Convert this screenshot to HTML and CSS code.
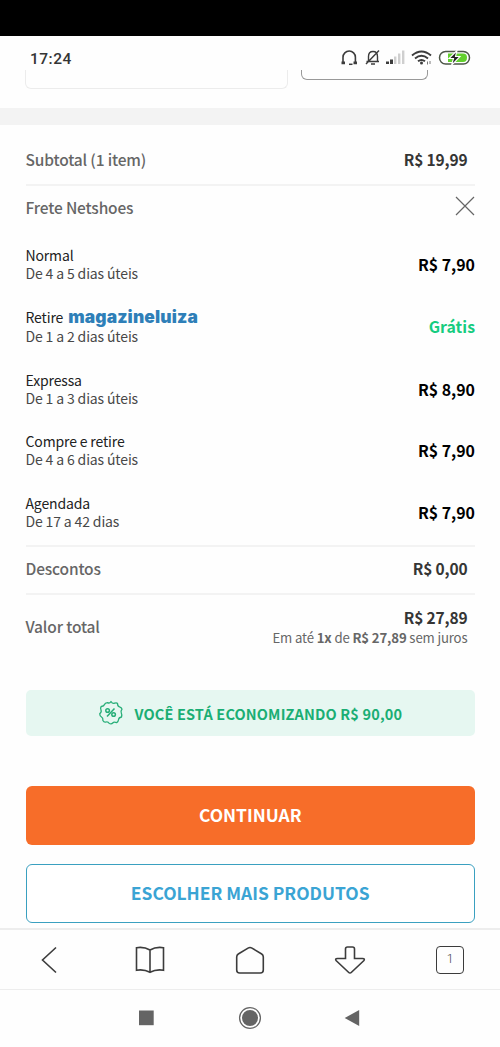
FILE: index.html
```html
<!DOCTYPE html>
<html lang="pt-BR">
<head>
<meta charset="utf-8">
<title>Carrinho</title>
<link rel="stylesheet" href="styles.css">
</head>
<body>
<div class="notch"></div>
<header class="status">
  <span class="clock">17:24</span>
  <svg class="status-icons" width="134" height="20" viewBox="0 0 134 20">
    <g fill="none" stroke="#3c3c3c" stroke-width="1.6">
      <path d="M4 15.200V9.200a6.200 6.200 0 0 1 12.400 0V15.200"/>
      <path d="M2.500 14.800h3.500M14.500 14.800h3.500" stroke-width="2.800"/>
      <path d="M10 16.300h3.500" stroke-width="1.500"/>
      <path d="M27.500 13.500h12.500M29.500 13V8.500q0-5 4.500-5t4.500 5V13M32 16h4M40 2.500L27 16" stroke-width="1.400"/>
    </g>
    <g fill="#3c3c3c"><path d="M47 13.500h3V16h-3zM51 11.500h3V16h-3z"/></g>
    <path d="M55 8.500h2.400V16H55zM59 5.500h2.400V16H59zM63 2.500h2.400V16H63z" fill="#cfcfcf"/>
    <g fill="none" stroke="#3c3c3c" stroke-width="1.900">
      <path d="M73 7.500Q82.500-.5 92 7.500M76 10.500Q82.500 5.200 89 10.500M79 13.300Q82.500 10.600 86 13.300"/>
    </g>
    <circle cx="82.500" cy="15" r="1.500" fill="#3c3c3c"/>
    <path d="M88.500 13.500v3M91 13v3" stroke="#777" stroke-width="1"/>
    <rect x="100.500" y="3.500" width="30" height="12.500" rx="6.200" fill="#fff" stroke="#4c5547" stroke-width="1.500"/>
    <path d="M109 5.500h15q4 0 4 4.200t-4 4.300h-15z" fill="#63d02e"/>
    <path d="M118 2.500l-8 8h4.500l-2 6.800 8.500-8.800h-4.500z" fill="#222" stroke="#fff" stroke-width="1.100"/>
  </svg>
</header>
<div class="clipped">
  <div class="field-end"></div>
  <div class="button-end"></div>
</div>
<div class="band"></div>
<main class="summary">
  <div class="row subtotal"><span class="label">Subtotal (1 item)</span><b class="amount">R$ 19,99</b></div>
  <section class="shipping">
    <div class="shipping-head">
      <span class="label">Frete Netshoes</span>
      <svg width="20" height="20" viewBox="0 0 20 20"><path d="M1 1l18 18M19 1L1 19" stroke="#666" stroke-width="1.200"/></svg>
    </div>
    <div class="option"><div class="method"><p class="name">Normal</p><p class="term">De 4 a 5 dias úteis</p></div><b class="price">R$ 7,90</b></div>
    <div class="option pickup"><div class="method"><p class="name">Retire <b class="brand">magazineluiza</b></p><p class="term">De 1 a 2 dias úteis</p></div><b class="price free">Grátis</b></div>
    <div class="option"><div class="method"><p class="name">Expressa</p><p class="term">De 1 a 3 dias úteis</p></div><b class="price">R$ 8,90</b></div>
    <div class="option"><div class="method"><p class="name">Compre e retire</p><p class="term">De 4 a 6 dias úteis</p></div><b class="price">R$ 7,90</b></div>
    <div class="option"><div class="method"><p class="name">Agendada</p><p class="term">De 17 a 42 dias</p></div><b class="price">R$ 7,90</b></div>
  </section>
  <div class="row discounts"><span class="label">Descontos</span><b class="amount">R$ 0,00</b></div>
  <div class="row total">
    <span class="label">Valor total</span>
    <div class="total-value"><b class="amount">R$ 27,89</b><p class="installments">Em até <b>1x</b> de <b>R$ 27,89</b> sem juros</p></div>
  </div>
  <div class="saving">
    <svg width="26" height="26" viewBox="0 0 26 26" fill="none" stroke="#27ae78">
      <path stroke-width="1.300" stroke-linejoin="round" d="M13 1.500Q14.500 4 16.600 3.200T19.500 3.500Q19.500 6.300 21.500 6.800T24 9.200Q22.400 11.300 23.300 13T23.500 17Q20.800 17.600 20.600 19.500T18.600 22.700Q16 21.500 14.700 23T11.300 23.500Q10 21.400 8 22T4.900 20.500Q5.200 17.900 3.500 17T1.700 13.700Q3.900 12 3 10T3.200 6.500Q6 6.300 6.500 4.500T9.500 2.600Q11.600 3.800 13 1.500z"/>
      <g stroke-width="1.500"><circle cx="9.600" cy="10.500" r="1.800"/><circle cx="15.600" cy="14.500" r="1.800"/><path d="M16.500 8.500l-7.500 8"/></g>
    </svg>
    <b>VOCÊ ESTÁ ECONOMIZANDO R$ 90,00</b>
  </div>
  <button class="action primary"><span>CONTINUAR</span></button>
  <button class="action secondary"><span>ESCOLHER MAIS PRODUTOS</span></button>
</main>
<nav class="browser-bar">
  <svg viewBox="0 0 32 32"><path d="M22 3.500L8.500 16 22 28.500"/></svg>
  <svg viewBox="0 0 32 32"><path d="M16 6Q10 2.500 2.500 3.700v22.500Q10 25 16 28.300 22 25 29.500 26.200V3.700Q22 2.500 16 6zV28"/></svg>
  <svg viewBox="0 0 32 32"><path d="M2.700 13q0-2 1.600-3L14 4.100q2-1.100 4 0L27.700 10q1.600 1 1.600 3v13q0 3-3 3H5.700q-3 0-3-3z"/></svg>
  <svg viewBox="0 0 32 32"><path d="M11.500 14.500V5q0-2 2-2h5q2 0 2 2v9.500h8q3 0 1.200 2.300L17.500 28.200q-1.500 1.700-3 0L2.300 16.800Q.5 14.500 3.500 14.500z"/></svg>
  <span class="tabs">1</span>
</nav>
<footer class="system-bar">
  <svg viewBox="0 0 24 24"><path d="M5 4.500h14.700v14.700H5z"/></svg>
  <svg viewBox="0 0 24 24"><circle cx="12" cy="12" r="8"/><circle cx="12" cy="12" r="10.400" fill="none" stroke="#646464" stroke-width="1.300"/></svg>
  <svg viewBox="0 0 24 24"><path d="M17.200 4v16L2.700 12z"/></svg>
</footer>
</body>
</html>
```
FILE: styles.css
```css
* { box-sizing: border-box; }
body {
  margin: 0;
  width: 500px;
  height: 1047px;
  overflow: hidden;
  background: #fefefe;
  color: #353535;
  font-family: "Noto Sans CJK SC", "Open Sans", sans-serif;
}
p { margin: 0; }
.notch { height: 36px; background: #000; }
.status {
  height: 34px;
  display: flex;
  justify-content: space-between;
  align-items: flex-start;
  padding: 12px 27px 0 30px;
}
.clock { font: 500 15.5px/20px Roboto, sans-serif; letter-spacing: .5px; padding-top: .6px; }
.clipped {
  height: 38px;
  display: flex;
  gap: 13px;
  padding-left: 25px;
}
.field-end { width: 263px; height: 19px; border: 1px solid #ececec; border-top: 0; border-radius: 0 0 6px 6px; }
.button-end { width: 127px; height: 10px; border: 1px solid #999; border-top: 0; border-radius: 0 0 6px 6px; }
.band { height: 17px; background: #f3f3f3; }
.summary { height: 803px; padding: 0 25px 0 25.500px; }
.row { display: flex; justify-content: space-between; border-bottom: 2px solid #f3f3f3; padding-right: 7.500px; }
.label { font-size: 15.5px; line-height: 20px; font-weight: 500; color: #666; letter-spacing: -.16px; }
.amount { font-size: 15.5px; line-height: 20px; letter-spacing: -.14px; }
.price { font-size: 15.900px; line-height: 20px; padding-top: 2px; }
.subtotal { height: 61px; padding-top: 24px; }
.shipping { height: 361px; border-bottom: 2px solid #f3f3f3; }
.shipping-head { height: 47.200px; display: flex; justify-content: space-between; padding-top: 11px; }
.shipping-head svg { margin-top: -1px; }
.option { height: 61.400px; display: flex; justify-content: space-between; align-items: center; }
.pickup { height: 63.500px; }
.name, .term { font-size: 14px; line-height: 18px; letter-spacing: -.14px; }
.name { color: #222; }
.term { color: #484848; }
.pickup .name { line-height: 20px; }
.brand { margin-left: 2px; font: 900 17.400px/18px Inter, sans-serif; letter-spacing: .15px; color: #2e7fb8; }
.price { color: #000; }
.free { color: #16cc7f; }
.discounts { height: 48px; padding-top: 11px; }
.total { height: 95px; padding-top: 12px; border: 0; }
.total .label { padding-top: 9px; }
.total-value { text-align: right; line-height: 20px; }
.installments { font-size: 13.200px; line-height: 21px; letter-spacing: -.14px; color: #666; }
.saving {
  height: 46px;
  display: flex;
  align-items: center;
  gap: 11px;
  padding-left: 72px;
  border-radius: 5px;
  background: #e6f7f1;
  color: #1aae74;
  font-size: 14.500px;
  letter-spacing: .15px;
}
.action {
  display: block;
  width: 100%;
  height: 59px;
  border-radius: 6px;
  padding: 0 0 2px;
  font: 700 17.400px/20px "Noto Sans CJK SC", sans-serif;
}
.primary { margin-top: 50px; border: 0; background: #f76d29; color: #fff; }
.secondary { margin-top: 19px; border: 1px solid #3aa0c0; background: #fff; color: #3aa4d4; }
.browser-bar {
  height: 62px;
  display: grid;
  grid-template-columns: repeat(5, 100px);
  place-items: center;
  border-top: 2px solid #ededed;
  border-bottom: 1px solid #ededed;
}
.browser-bar svg { width: 32px; height: 32px; fill: none; stroke: #3c3c3c; stroke-width: 1.600; }
.tabs { width: 28px; height: 28px; border: 1.500px solid #3c3c3c; border-radius: 4px; color: #3c3c3c; font: 300 12px/25px Roboto, sans-serif; text-align: center; }
.system-bar { height: 57px; display: flex; justify-content: center; gap: 80px; padding-top: 16px; }
.system-bar svg { width: 24px; height: 24px; fill: #646464; }
```
